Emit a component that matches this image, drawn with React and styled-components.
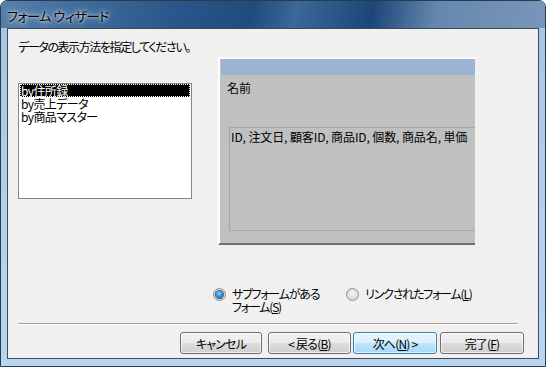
import React from "react";
import styled, { createGlobalStyle } from "styled-components";

const Global = createGlobalStyle`
  html, body { margin: 0; padding: 0; background: #ffffff; }
  body { font-family: "Noto Sans CJK JP", "Noto Sans", sans-serif; }
  * { box-sizing: border-box; }
`;

const Window = styled.div`
  width: 546px;
  height: 367px;
  border: 1px solid #2b3b4e;
  border-radius: 7px 7px 0 0;
  background: linear-gradient(to bottom, #a7c4e2 0%, #b4d0ec 60%, #b9d6f0 100%);
  display: flex;
  flex-direction: column;
  overflow: hidden;
`;

const TitleBar = styled.div`
  height: 27px;
  flex: none;
  display: flex;
  align-items: center;
  padding-left: 6px;
  background: linear-gradient(
    100deg,
    #577fac 0%,
    #3a6898 18%,
    #2a5789 32%,
    #1f4b7d 46%,
    #3c6898 54%,
    #1c4678 68%,
    #6688ae 80%,
    #7896b9 100%
  );
`;

const TitleText = styled.span`
  font-size: 13px;
  color: #000;
  font-feature-settings: "palt";
  letter-spacing: -0.4px;
  text-shadow: 0 0 6px rgba(255, 255, 255, 0.9), 0 0 3px rgba(255, 255, 255, 0.9);
  margin-top: 1px;
`;

const Frame = styled.div`
  flex: 1;
  display: flex;
  padding: 0 6px 7px 6px;
`;

const Client = styled.div`
  flex: 1;
  border: 1px solid #3d4a58;
  background: #f0f0f0;
  display: flex;
  flex-direction: column;
  padding: 9px 0 0 10px;
  font-size: 12px;
  line-height: 13px;
  font-feature-settings: "palt";
  color: #000;
`;

const Instruction = styled.div`
  height: 15px;
  margin-top: 2px;
  letter-spacing: -1.4px;
  white-space: nowrap;
`;

const MiddleRow = styled.div`
  display: flex;
  align-items: flex-start;
  margin-top: 2px;
`;

const ListBox = styled.div`
  width: 174px;
  height: 116px;
  margin-top: 26px;
  border: 1px solid #828790;
  background: #fff;
  padding: 0 1px;
  letter-spacing: -0.6px;
`;

const ListItem = styled.div`
  height: 13px;
  line-height: 13px;
  padding-left: 1px;
  white-space: nowrap;
  background: ${(p) => (p.$selected ? "#000" : "transparent")};
  color: ${(p) => (p.$selected ? "#fff" : "#000")};
  outline: ${(p) => (p.$selected ? "1px dotted #fff" : "none")};
  outline-offset: -1px;
`;

const Preview = styled.div`
  width: 257px;
  height: 188px;
  margin-left: 26px;
  border-top: 2px solid #ffffff;
  border-left: 2px solid #ffffff;
  border-bottom: 2px solid #6e6e6e;
  background: #c0c0c0;
  display: flex;
  flex-direction: column;
  padding-left: 1px;
  overflow: hidden;
`;

const PreviewHeader = styled.div`
  height: 16px;
  background: #9ab4d2;
  flex: none;
`;

const FieldLabel = styled.div`
  margin: 6px 0 0 6px;
  height: 13px;
`;

const FieldBox = styled.div`
  margin: 33px 0 0 8px;
  height: 104px;
  border: 1px solid #a6a6a6;
  border-right: none;
  padding: 2px 0 0 1px;
  white-space: nowrap;
  letter-spacing: -0.1px;
`;

const RadioRow = styled.div`
  display: flex;
  align-items: flex-start;
  margin: 42px 0 0 195px;
  height: 26px;
`;

const RadioOption = styled.label`
  display: flex;
  align-items: flex-start;
  gap: 6px;
  width: ${(p) => p.$w}px;
  flex: none;
`;

const RadioCircle = styled.span`
  flex: none;
  width: 13px;
  height: 13px;
  margin-top: 1px;
  border-radius: 50%;
  border: 1px solid #8e8f8f;
  background: radial-gradient(circle at 50% 40%, #f4f4f4 0%, #d8d8d8 70%, #cfcfcf 100%);
  display: flex;
  align-items: center;
  justify-content: center;
`;

const RadioDot = styled.span`
  width: 7px;
  height: 7px;
  border-radius: 50%;
  background: radial-gradient(circle at 45% 35%, #8fd2ff 0%, #2a8ad4 55%, #0d4f8f 100%);
  box-shadow: 0 0 0 1px #1d5e96;
`;

const RadioText = styled.span`
  line-height: 13px;
  letter-spacing: -1.2px;
  white-space: nowrap;
`;

const Separator = styled.div`
  margin: 10px 19px 0 0;
  border-top: 1px solid #a0a0a0;
  border-bottom: 1px solid #ffffff;
  width: 500px;
`;

const ButtonRow = styled.div`
  display: flex;
  justify-content: flex-end;
  padding-right: 14px;
  margin-top: 7px;
`;

const Button = styled.button`
  width: ${(p) => p.$w || 82}px;
  height: 22px;
  margin-left: ${(p) => p.$gap || 0}px;
  border: 1px solid ${(p) => (p.$default ? "#3c7fb1" : "#707070")};
  border-radius: 3px;
  font-family: "Noto Sans CJK JP", "Noto Sans", sans-serif;
  font-size: 12px;
  font-feature-settings: "palt";
  letter-spacing: -0.8px;
  color: #000;
  padding: 0;
  background: ${(p) =>
    p.$default
      ? "linear-gradient(to bottom, #eaf6fd 0%, #d9f0fc 50%, #bee6fd 50%, #a7d9f5 100%)"
      : "linear-gradient(to bottom, #f2f2f2 0%, #ebebeb 50%, #dddddd 50%, #cfcfcf 100%)"};
  box-shadow: inset 0 0 0 1px rgba(255, 255, 255, 0.65);
`;

const U = styled.span`
  text-decoration: underline;
`;

export default function App() {
  return (
    <>
      <Global />
      <Window>
        <TitleBar>
          <TitleText>フォーム ウィザード</TitleText>
        </TitleBar>
        <Frame>
          <Client>
            <Instruction>データの表示方法を指定してください。</Instruction>
            <MiddleRow>
              <ListBox>
                <ListItem $selected>by住所録</ListItem>
                <ListItem>by売上データ</ListItem>
                <ListItem>by商品マスター</ListItem>
              </ListBox>
              <Preview>
                <PreviewHeader />
                <FieldLabel>名前</FieldLabel>
                <FieldBox>ID, 注文日, 顧客ID, 商品ID, 個数, 商品名, 単価</FieldBox>
              </Preview>
            </MiddleRow>
            <RadioRow>
              <RadioOption $w={133}>
                <RadioCircle>
                  <RadioDot />
                </RadioCircle>
                <RadioText>
                  サブフォームがある
                  <br />
                  フォーム(<U>S</U>)
                </RadioText>
              </RadioOption>
              <RadioOption $w={150}>
                <RadioCircle />
                <RadioText>
                  リンクされたフォーム(<U>L</U>)
                </RadioText>
              </RadioOption>
            </RadioRow>
            <Separator />
            <ButtonRow>
              <Button $w={82}>キャンセル</Button>
              <Button $w={83} $gap={6}>
                &lt; 戻る(<U>B</U>)
              </Button>
              <Button $w={84} $gap={2} $default>
                次へ(<U>N</U>) &gt;
              </Button>
              <Button $w={84} $gap={3}>
                完了(<U>F</U>)
              </Button>
            </ButtonRow>
          </Client>
        </Frame>
      </Window>
    </>
  );
}
